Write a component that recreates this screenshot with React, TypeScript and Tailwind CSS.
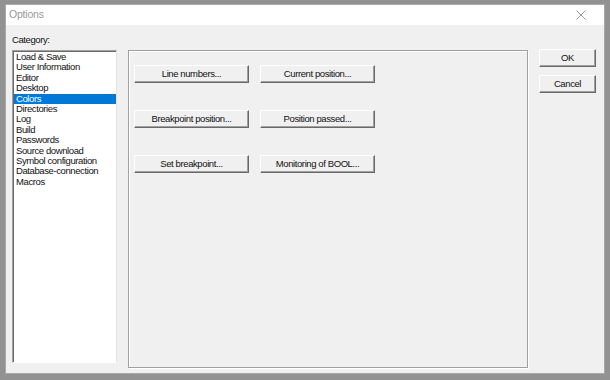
import React from 'react';

const categories = [
  'Load & Save',
  'User Information',
  'Editor',
  'Desktop',
  'Colors',
  'Directories',
  'Log',
  'Build',
  'Passwords',
  'Source download',
  'Symbol configuration',
  'Database-connection',
  'Macros',
];

const colorButtons = [
  ['Line numbers...', 'Current position...'],
  ['Breakpoint position...', 'Position passed...'],
  ['Set breakpoint...', 'Monitoring of BOOL...'],
];

const font = "font-['Liberation_Sans',Arial,sans-serif]";

const Button: React.FC<{ label: string; className?: string }> = ({ label, className }) => (
  <div
    className={`flex items-center justify-center bg-[#f0f0f0] border-t border-l border-white border-b border-r border-b-[#696969] border-r-[#696969] shadow-[inset_-1px_-1px_0_#a0a0a0] text-[9.5px] tracking-[-0.4px] text-[#111] ${className ?? ''}`}
  >
    {label}
  </div>
);

export default function App() {
  const selected = 'Colors';

  return (
    <div className={`w-[610px] h-[380px] bg-[#929292] pl-[5px] pt-[4px] ${font}`}>
      <div className="w-[600px] h-[370px] border border-[#a8a8a8] bg-[#f0f0f0] flex flex-col">
        {/* title bar */}
        <div className="h-[20px] bg-white flex items-center justify-between pl-[3px] pr-[18px] shrink-0">
          <span className="text-[10.5px] tracking-[-0.2px] text-[#9a9a9a]">Options</span>
          <svg width="10" height="10" viewBox="0 0 10 10" className="text-[#9a9a9a]">
            <path d="M0.5 0.5 L9.5 9.5 M9.5 0.5 L0.5 9.5" stroke="currentColor" strokeWidth="1" />
          </svg>
        </div>

        {/* body */}
        <div className="flex-1 flex pl-[6px] pt-[9px]">
          <div className="w-[105px] flex flex-col">
            <div className="h-[16px] text-[9.5px] tracking-[-0.4px] leading-[12px] text-[#111]">Category:</div>
            <div className="h-[313px] bg-white border-t border-l border-[#a0a0a0] border-b border-r border-b-white border-r-[#e3e3e3] shadow-[inset_1px_1px_0_#696969] pt-[1px] pl-[1px]">
              {categories.map((c) => (
                <div
                  key={c}
                  className={`h-[10.4px] leading-[10.4px] pl-[2px] text-[9.5px] tracking-[-0.4px] whitespace-nowrap ${
                    c === selected ? 'bg-[#0078d7] text-white' : 'text-[#111]'
                  }`}
                >
                  {c}
                </div>
              ))}
            </div>
          </div>

          <div className="ml-[11px] mt-[16px] w-[400px] h-[318px] border border-[#a0a0a0] shadow-[inset_1px_1px_0_white,1px_1px_0_white] pl-[5px] pt-[14px] flex flex-col gap-[27px]">
            {colorButtons.map((row, i) => (
              <div key={i} className="flex gap-[11px]">
                {row.map((b) => (
                  <Button key={b} label={b} className="w-[115px] h-[18px]" />
                ))}
              </div>
            ))}
          </div>

          <div className="ml-[11px] mt-[15px] flex flex-col gap-[8px]">
            <Button label="OK" className="w-[57px] h-[18px]" />
            <Button label="Cancel" className="w-[57px] h-[18px]" />
          </div>
        </div>
      </div>
    </div>
  );
}
